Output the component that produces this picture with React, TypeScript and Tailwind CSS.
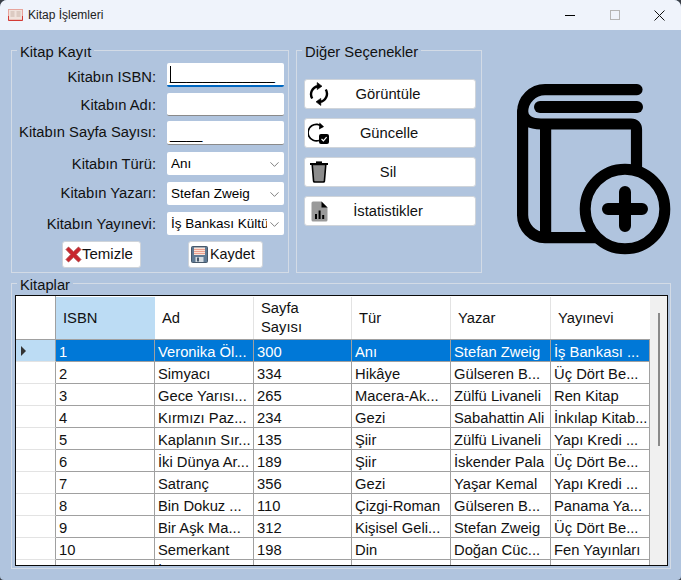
import { ChevronDown } from "lucide-react";

const ROWS = [
  ["1", "Veronika Öl...", "300", "Anı", "Stefan Zweig", "İş Bankası ..."],
  ["2", "Simyacı", "334", "Hikâye", "Gülseren B...", "Üç Dört Be..."],
  ["3", "Gece Yarısı...", "265", "Macera-Ak...", "Zülfü Livaneli", "Ren Kitap"],
  ["4", "Kırmızı Paz...", "234", "Gezi", "Sabahattin Ali", "İnkılap Kitab..."],
  ["5", "Kaplanın Sır...", "135", "Şiir", "Zülfü Livaneli", "Yapı Kredi ..."],
  ["6", "İki Dünya Ar...", "189", "Şiir", "İskender Pala", "Üç Dört Be..."],
  ["7", "Satranç", "356", "Gezi", "Yaşar Kemal", "Yapı Kredi ..."],
  ["8", "Bin Dokuz ...", "110", "Çizgi-Roman", "Gülseren B...", "Panama Ya..."],
  ["9", "Bir Aşk Ma...", "312", "Kişisel Geli...", "Stefan Zweig", "Üç Dört Be..."],
  ["10", "Semerkant", "198", "Din", "Doğan Cüc...", "Fen Yayınları"],
  ["", "İnce Memed", "", "", "", ""],
];

const COL_WIDTHS = ["w-[99px]", "w-[99px]", "w-[98px]", "w-[99px]", "w-[100px]", "w-[99px]"];

function Label({ children, className }: { children: string; className?: string }) {
  return (
    <span className={`mr-[11px] w-[144px] shrink-0 text-right text-[14.75px] leading-[18px] text-[#111] ${className ?? ""}`}>
      {children}
    </span>
  );
}

function Combo({ value }: { value: string }) {
  return (
    <div className="flex h-[23px] w-[117px] items-center justify-between overflow-hidden rounded-[2px] bg-white pl-[4px] pr-[2px] pt-[1px] text-[13.5px] text-black">
      <span className="whitespace-nowrap overflow-hidden">{value}</span>
      <ChevronDown size={15} strokeWidth={1.2} color="#555" className="shrink-0" />
    </div>
  );
}

function BookIcon() {
  return (
    <svg width="155" height="171" viewBox="0 0 155 171" fill="none" stroke="#000" strokeLinecap="round">
      <path d="M120 5.6H28A22.5 22.5 0 0 0 5.6 28V131A22.5 22.5 0 0 0 28 153.6H79" strokeWidth="11.2" />
      <path d="M23 23H120" strokeWidth="12" />
      <path d="M5.6 28C5.6 36 14 40 24 40H114Q119.5 40 119.5 45.5V84" strokeWidth="11.2" />
      <path d="M28.6 40V153" strokeWidth="11.2" strokeLinecap="butt" />
      <circle cx="108" cy="125" r="39.8" strokeWidth="11" />
      <path d="M91 125H125M108 108V142" strokeWidth="12" />
    </svg>
  );
}

function RefreshIcon() {
  return (
    <svg width="20" height="24" viewBox="0 0 20 24" fill="none" stroke="#000" strokeWidth="2.4">
      <path d="M3.2 16.5A8.2 8.2 0 0 1 9 4.2" />
      <path d="M16.8 7.5A8.2 8.2 0 0 1 11 19.8" />
      <path d="M8.2 0.5L13 4.2L8.2 7.6Z" fill="#000" strokeWidth="0.6" />
      <path d="M11.8 16.4L7 19.8L11.8 23.5Z" fill="#000" strokeWidth="0.6" />
    </svg>
  );
}

function UpdateIcon() {
  return (
    <svg width="22" height="23" viewBox="0 0 22 23" fill="none">
      <path d="M11 18.5A8.3 8.3 0 1 1 14.5 5" stroke="#000" strokeWidth="1.7" />
      <path d="M11.5 0.5L16 4.8L11 7.5Z" fill="#000" />
      <rect x="11" y="12" width="10" height="10" rx="2" fill="#000" />
      <path d="M13.5 17L15.4 18.8L18.6 15.2" stroke="#fff" strokeWidth="1.2" />
    </svg>
  );
}

function TrashIcon() {
  return (
    <svg width="20" height="22" viewBox="0 0 20 22" fill="none">
      <path d="M3.2 3.5L4.6 20.2Q4.7 21 5.5 21H14.5Q15.3 21 15.4 20.2L16.8 3.5Z" fill="#8c8c8c" stroke="#000" strokeWidth="1.6" />
      <path d="M1 3H19" stroke="#000" strokeWidth="2" />
      <path d="M7 1.2H13" stroke="#000" strokeWidth="1.6" />
    </svg>
  );
}

function StatsIcon() {
  return (
    <svg width="17" height="21" viewBox="0 0 17 21">
      <path d="M2 0.5H10.5L16.5 6.5V19Q16.5 20.5 15 20.5H2Q0.5 20.5 0.5 19V2Q0.5 0.5 2 0.5Z" fill="#9a9a9a" />
      <path d="M10.5 0.5L16.5 6.5H10.5Z" fill="#000" />
      <rect x="4" y="13" width="2" height="5" fill="#000" />
      <rect x="7.6" y="9.5" width="2" height="8.5" fill="#000" />
      <rect x="11.2" y="14" width="2" height="4" fill="#000" />
    </svg>
  );
}

function ClearIcon() {
  return (
    <svg width="17" height="17" viewBox="0 0 17 17">
      <path d="M1 3.5L3.5 1L8.5 5.8L13.5 1L16 3.5L11.2 8.5L16 13.5L13.5 16L8.5 11.2L3.5 16L1 13.5L5.8 8.5Z" fill="#c9252d" stroke="#a83a3a" strokeWidth="0.8" strokeLinejoin="round" />
    </svg>
  );
}

function SaveIcon() {
  return (
    <svg width="17" height="17" viewBox="0 0 17 17">
      <rect x="0.5" y="0.5" width="16" height="16" rx="1" fill="#5f7a94" stroke="#46586a" />
      <rect x="3" y="1.5" width="11" height="7.5" fill="#fbe3d6" />
      <path d="M3 3.5H14M3 5.5H14M3 7.5H14" stroke="#e88f7c" strokeWidth="0.8" />
      <rect x="4.5" y="11" width="8" height="5" fill="#d5dce2" />
      <rect x="6" y="11.5" width="2" height="4" fill="#46586a" />
    </svg>
  );
}

function WindowIcon() {
  return (
    <svg width="15" height="13" viewBox="0 0 15 13">
      <rect x="0.5" y="0.5" width="14" height="10.5" fill="#f0e2dc" stroke="#e7a49c" />
      <path d="M2.5 3H6.5M2.5 5H6.5M8.5 3H12.5M8.5 5H12.5M2.5 7H6.5M8.5 7H12.5" stroke="#c9b3a8" />
      <path d="M0.5 7V11.5H14.5V7" fill="none" stroke="#d33a36" />
    </svg>
  );
}

function SideButton({ label, icon, textClass }: { label: string; icon: React.ReactNode; textClass?: string }) {
  return (
    <div className="flex h-[30px] w-[172px] items-center rounded-[3px] border border-[#cfd4da] bg-white text-[14.75px]">
      <span className="flex w-[28px] shrink-0 items-center justify-center">{icon}</span>
      <span className={`w-[110px] text-center text-[#111] ${textClass ?? ""}`}>{label}</span>
    </div>
  );
}

export default function App() {
  return (
    <div className="h-[580px] w-[681px] overflow-hidden bg-[#3a3f48] font-['Liberation_Sans',Arial,sans-serif]">
      <div className="h-full overflow-hidden rounded-t-[7px] rounded-b-[4px] bg-[#b0c4de]">
        {/* Title bar */}
        <div className="flex h-[30px] items-center bg-[#eff3fb] pl-[8px]">
          <WindowIcon />
          <span className="ml-[5px] text-[12px] text-[#222]">Kitap İşlemleri</span>
          <div className="-mr-[1px] ml-auto flex items-center">
            <div className="flex w-[45px] justify-center"><div className="h-[1px] w-[10px] bg-black" /></div>
            <div className="flex w-[45px] justify-center"><div className="h-[10px] w-[10px] border border-[#b5b5b5]" /></div>
            <div className="flex w-[45px] justify-center">
              <svg width="11" height="11" viewBox="0 0 11 11" stroke="#111" strokeWidth="1"><path d="M0.5 0.5L10.5 10.5M10.5 0.5L0.5 10.5" /></svg>
            </div>
          </div>
        </div>

        <div className="pl-[11px] pt-[11px]">
          <div className="flex">
            {/* Kitap Kayıt */}
            <fieldset className="h-[232px] w-[278px] border border-[#d3dbe6]">
              <legend className="ml-[5px] translate-y-[2px] px-[3px] text-[14.75px] leading-[18px] text-[#111]">Kitap Kayıt</legend>
              <div className="flex flex-col pt-[4px]">
                <div className="flex h-[24px] items-center">
                  <Label className="pt-[4px]">Kitabın ISBN:</Label>
                  <div className="relative h-[24px] w-[117px] overflow-hidden rounded-[2px] border-b-2 border-[#0067c0] bg-white pl-[3px] pt-[2px] text-[14.5px] leading-[20px] text-black">
                    _____________
                    <span className="absolute left-[3px] top-[3px] h-[17px] w-[1px] bg-black" />
                  </div>
                </div>
                <div className="mt-[6px] flex h-[23px] items-center">
                  <Label>Kitabın Adı:</Label>
                  <div className="h-[23px] w-[117px] rounded-[2px] border-b border-[#8a8a8a] bg-white" />
                </div>
                <div className="mt-[5px] flex h-[24px] items-center">
                  <Label className="pb-[2px]">Kitabın Sayfa Sayısı:</Label>
                  <div className="h-[24px] w-[117px] overflow-hidden rounded-[2px] border-b border-[#8a8a8a] bg-white pl-[3px] pt-[3px] text-[14.5px] leading-[20px] text-black">
                    ____
                  </div>
                </div>
                <div className="mt-[7px] flex h-[23px] items-center">
                  <Label>Kitabın Türü:</Label>
                  <Combo value="Anı" />
                </div>
                <div className="mt-[7px] flex h-[23px] items-center">
                  <Label className="pb-[2px]">Kitabın Yazarı:</Label>
                  <Combo value="Stefan Zweig" />
                </div>
                <div className="mt-[7px] flex h-[23px] items-center">
                  <Label>Kitabın Yayınevi:</Label>
                  <Combo value="İş Bankası Kültü" />
                </div>
                <div className="mt-[6px] flex pl-[50px]">
                  <div className="flex h-[27px] w-[79px] items-center rounded-[3px] border border-[#cfd4da] bg-white pl-[2px] text-[15px] text-[#111]">
                    <ClearIcon />
                    <span>Temizle</span>
                  </div>
                  <div className="ml-[47px] flex h-[27px] w-[75px] items-center rounded-[3px] border border-[#cfd4da] bg-white pl-[2px] text-[14.4px] text-[#111]">
                    <SaveIcon />
                    <span className="ml-[2px]">Kaydet</span>
                  </div>
                </div>
              </div>
            </fieldset>

            {/* Diğer Seçenekler */}
            <fieldset className="ml-[7px] h-[232px] w-[186px] border border-[#d3dbe6]">
              <legend className="ml-[5px] translate-y-[2px] px-[3px] text-[14.75px] leading-[18px] text-[#111]">Diğer Seçenekler</legend>
              <div className="flex flex-col gap-[9px] pl-[7px] pt-[20px]">
                <SideButton label="Görüntüle" icon={<RefreshIcon />} />
                <SideButton label="Güncelle" icon={<UpdateIcon />} textClass="pl-[2px]" />
                <SideButton label="Sil" icon={<TrashIcon />} />
                <SideButton label="İstatistikler" icon={<StatsIcon />} />
              </div>
            </fieldset>

            <div className="ml-[35px] mt-[43px]">
              <BookIcon />
            </div>
          </div>

          {/* Kitaplar */}
          <fieldset className="mt-[1px] h-[295px] w-[660px] border border-[#d3dbe6]">
            <legend className="ml-[5px] translate-y-[2px] px-[3px] text-[14.75px] leading-[18px] text-[#111]">Kitaplar</legend>
            <div className="ml-[3px] mt-[3px] flex h-[271px] w-[653px] overflow-hidden border border-[#0a0a0a] bg-[#f0f0f0] text-[14.75px]">
              <div className="w-[634px] shrink-0 overflow-hidden bg-white">
                <div className="flex h-[44px] border-b border-[#a0a0a0] text-[#111]">
                  <div className="w-[40px] shrink-0 border-r border-[#a0a0a0]" />
                  <div className="mt-[1px] flex w-[99px] items-center bg-[#bcdcf4] pl-[7px]">ISBN</div>
                  <div className="mt-[1px] flex w-[99px] items-center border-r border-[#e3e3e3] pl-[7px]">Ad</div>
                  <div className="mt-[1px] flex w-[98px] items-center border-r border-[#e3e3e3] pl-[7px] leading-[19px]">Sayfa<br />Sayısı</div>
                  <div className="mt-[1px] flex w-[99px] items-center border-r border-[#e3e3e3] pl-[7px]">Tür</div>
                  <div className="mt-[1px] flex w-[100px] items-center border-r border-[#e3e3e3] pl-[7px]">Yazar</div>
                  <div className="mt-[1px] flex w-[99px] items-center pl-[7px]">Yayınevi</div>
                </div>
                {ROWS.map((row, i) => (
                  <div key={i} className={`flex h-[22px] ${i === 0 ? "bg-[#0078d7] text-white" : "text-[#111]"}`}>
                    <div className={`flex w-[40px] shrink-0 items-center border-b border-r border-b-[#e3e3e3] border-r-[#a0a0a0] pl-[5px] ${i === 0 ? "bg-[#bcdcf4]" : "bg-white"}`}>
                      {i === 0 && <div className="h-0 w-0 border-y-[5px] border-l-[5px] border-y-transparent border-l-[#333]" />}
                    </div>
                    {row.map((cell, j) => (
                      <div key={j} className={`${COL_WIDTHS[j]} flex shrink-0 items-center overflow-hidden whitespace-nowrap border-b border-r border-[#a0a0a0] pl-[3px] pt-[3px]`}>
                        {cell}
                      </div>
                    ))}
                  </div>
                ))}
              </div>
              <div className="relative flex-1">
                <div className="absolute left-[8px] top-[17px] h-[133px] w-[2px] bg-[#8a8a8a]" />
              </div>
            </div>
          </fieldset>
        </div>
      </div>
    </div>
  );
}
